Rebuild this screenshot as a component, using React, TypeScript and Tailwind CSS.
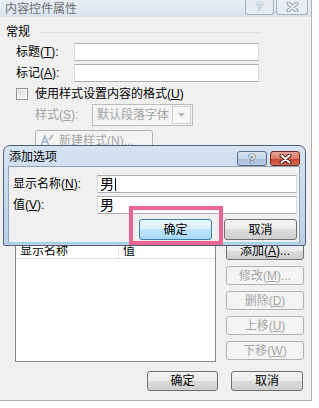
import React from "react";

const F = "font-['Liberation_Sans','Noto_Sans_CJK_SC',sans-serif]";

const STD =
  "flex items-center justify-center rounded-[3px] border border-[#707070] bg-[linear-gradient(#f2f2f2_0%,#ebebeb_50%,#dddddd_50%,#cfcfcf_100%)] text-black";
const DIS =
  "flex items-center justify-center rounded-[3px] border border-[#adb2b5] bg-[#f4f4f4] text-[#a6a6a6]";
const FOC =
  "flex items-center justify-center rounded-[3px] border border-[#3c7fb1] bg-[linear-gradient(#eaf6fd_0%,#d9f0fc_50%,#bee6fd_50%,#a7d9f5_100%)] text-black";

function XGlyph({ fill, stroke }: { fill: string; stroke: string }) {
  return (
    <svg width="13" height="10" viewBox="0 0 13 10">
      <path d="M2.5 1.5 L10.5 8.5 M10.5 1.5 L2.5 8.5" stroke={stroke} strokeWidth="4" strokeLinecap="round" />
      <path d="M2.5 1.5 L10.5 8.5 M10.5 1.5 L2.5 8.5" stroke={fill} strokeWidth="2" strokeLinecap="round" />
    </svg>
  );
}

export default function App() {
  return (
    <div className={`relative w-[319px] h-[408px] overflow-hidden bg-white text-[12px] leading-[14px] text-black ${F}`}>
      {/* background dialog */}
      <div className="flex flex-col w-[312px] h-[401px] bg-[#f0f0f0] border-r border-b border-[#b0b0b0]">
        {/* title bar */}
        <div className="h-[17px] shrink-0 flex bg-linear-to-b from-[#e7eef5] to-[#d9e3ed]">
          <span className="ml-[5px] mt-[2px] text-[#707070]">内容控件属性</span>
          <div className="ml-auto mr-[3px] flex gap-[2px]">
            <div className="w-[29px] h-[15px] rounded-b-[3px] border border-t-0 border-[#a4b0bc] bg-[#e6ecf2] flex items-center justify-center text-[12px] font-bold text-[#eef2f6] [text-shadow:0_0_1px_#7d8a98,0_0_1px_#7d8a98]">
              ?
            </div>
            <div className="w-[32px] h-[15px] rounded-b-[3px] border border-t-0 border-[#a4b0bc] bg-[#e6ecf2] flex items-center justify-center">
              <XGlyph fill="#eef2f6" stroke="#8e9aa7" />
            </div>
          </div>
        </div>

        {/* 常规 */}
        <div className="mt-[8px] h-[14px] flex items-center">
          <span className="ml-[6px]">常规</span>
          <div className="ml-[10px] w-[220px] h-px bg-[#d8e1e8]" />
        </div>

        <div className="mt-[4px] h-[18px] flex items-center">
          <span className="ml-[16px] w-[58px]">
            标题(<u>T</u>):
          </span>
          <div className="w-[185px] h-[18px] bg-white border border-[#abadb3] border-l-[#d5d9e0] border-r-[#d5d9e0]" />
        </div>
        <div className="mt-[3px] h-[18px] flex items-center">
          <span className="ml-[16px] w-[58px]">
            标记(<u>A</u>):
          </span>
          <div className="w-[185px] h-[18px] bg-white border border-[#abadb3] border-l-[#d5d9e0] border-r-[#d5d9e0]" />
        </div>

        <div className="mt-[5px] h-[13px] flex items-center">
          <div className="ml-[16px] w-[12px] h-[12px] border border-[#8e8f8f] p-px bg-white">
            <div className="w-full h-full bg-linear-to-br from-[#d8d8d8] to-[#f8f8f8]" />
          </div>
          <span className="ml-[7px]">
            使用样式设置内容的格式(<u>U</u>)
          </span>
        </div>

        <div className="mt-[4px] h-[22px] flex items-center">
          <span className="ml-[35px] w-[57px] text-[#a3a3a3]">
            样式(<u>S</u>):
          </span>
          <div className="w-[101px] h-[22px] border border-[#bdbdbd] bg-[#f4f4f4] flex">
            <span className="flex-1 pl-[4px] flex items-center text-[#a3a3a3]">默认段落字体</span>
            <div className="w-[19px] border border-[#d0d0d0] m-px bg-[#f7f7f7] flex items-center justify-center">
              <svg width="7" height="4" viewBox="0 0 7 4">
                <path d="M0 0 L7 0 L3.5 4 Z" fill="#b8b8b8" />
              </svg>
            </div>
          </div>
        </div>

        <div className={`mt-[4px] ml-[35px] w-[118px] h-[21px] ${DIS} justify-start`}>
          <svg className="ml-[4px]" width="14" height="13" viewBox="0 0 14 13">
            <path d="M1 12 L5 2 L9 12 M3 8 L7 8" stroke="#9fb4cc" strokeWidth="1.6" fill="none" />
            <path d="M9 6 L13 1" stroke="#b7b7b7" strokeWidth="2" />
          </svg>
          <span className="ml-[5px]">
            新建样式(<u>N</u>)...
          </span>
        </div>

        {/* list area */}
        <div className="mt-[87px] flex items-start">
          <div className="ml-[15px] w-[201px] h-[124px] border border-[#828790] bg-white flex flex-col">
            <div className="h-[20px] flex border-b border-[#e0e0e0] shrink-0">
              <div className="w-[103px] pl-[4px] pt-[5px] border-r border-[#e8e8e8]">显示名称</div>
              <div className="pl-[4px] pt-[5px]">值</div>
            </div>
          </div>
          <div className="ml-[10px] mt-[3px] w-[78px] flex flex-col gap-[6px]">
            <div className={`h-[19px] ${STD}`}>
              添加(<u>A</u>)...
            </div>
            <div className={`h-[19px] ${DIS}`}>
              修改(<u>M</u>)...
            </div>
            <div className={`h-[19px] ${DIS}`}>
              删除(<u>D</u>)
            </div>
            <div className={`h-[19px] ${DIS}`}>
              上移(<u>U</u>)
            </div>
            <div className={`h-[19px] ${DIS}`}>
              下移(<u>W</u>)
            </div>
          </div>
        </div>

        <div className="mt-[9px] flex">
          <div className={`ml-[147px] w-[71px] h-[20px] ${STD}`}>确定</div>
          <div className={`ml-[13px] w-[72px] h-[20px] ${STD}`}>取消</div>
        </div>
      </div>

      {/* overlay dialog */}
      <div className="absolute left-[3px] top-[145px] w-[303px] h-[101px] rounded-t-[7px] rounded-b-[2px] border border-[#4f6378] bg-linear-to-b from-[#d6e3f2] to-[#bccfe7] flex flex-col">
        <div className="h-[20px] shrink-0 flex items-start">
          <span className="ml-[5px] mt-[4px]">添加选项</span>
          <div className="ml-auto mr-[5px] mt-[5px] flex gap-[3px]">
            <div className="w-[30px] h-[15px] rounded-[3px] border border-[#5a6d84] bg-[linear-gradient(#dbe5f1_0%,#c3d3e6_50%,#a9bfd8_50%,#b7cbe2_100%)] flex items-center justify-center text-[12px] font-bold text-white [text-shadow:0_0_1px_#22364d,0_0_1px_#22364d,0_0_1px_#22364d]">
              ?
            </div>
            <div className="w-[30px] h-[15px] rounded-[3px] border border-[#6b2a22] bg-[linear-gradient(#e8a394_0%,#d9786a_50%,#c6432f_50%,#d46a4f_100%)] flex items-center justify-center">
              <XGlyph fill="#ffffff" stroke="#4a1c16" />
            </div>
          </div>
        </div>
        <div className="ml-[4px] w-[292px] h-[77px] shrink-0 border border-[#8fa3b9] border-b-[#8fd6ee] bg-[#f0f0f0] flex flex-col">
          <div className="mt-[8px] h-[18px] flex items-center">
            <span className="ml-[4px] w-[84px]">
              显示名称(<u>N</u>):
            </span>
            <div className="w-[200px] h-[18px] bg-white border border-[#abadb3] border-l-[#d5d9e0] border-r-[#d5d9e0] pl-[2px] flex items-center text-[14px]">
              男
              <span className="ml-px w-px h-[13px] bg-black" />
            </div>
          </div>
          <div className="mt-[3px] h-[18px] flex items-center">
            <span className="ml-[4px] w-[84px]">
              值(<u>V</u>):
            </span>
            <div className="w-[200px] h-[18px] bg-white border border-[#abadb3] border-l-[#d5d9e0] border-r-[#d5d9e0] pl-[2px] flex items-center text-[14px]">
              男
            </div>
          </div>
          <div className="mt-[5px] flex">
            <div className={`ml-[130px] w-[73px] h-[21px] ${FOC}`}>确定</div>
            <div className={`ml-[12px] w-[73px] h-[21px] ${STD}`}>取消</div>
          </div>
        </div>
      </div>

      {/* pink annotation */}
      <div className="absolute left-[129px] top-[206px] w-[94px] h-[39px] border-[4px] border-[#ec6593]" />
    </div>
  );
}
